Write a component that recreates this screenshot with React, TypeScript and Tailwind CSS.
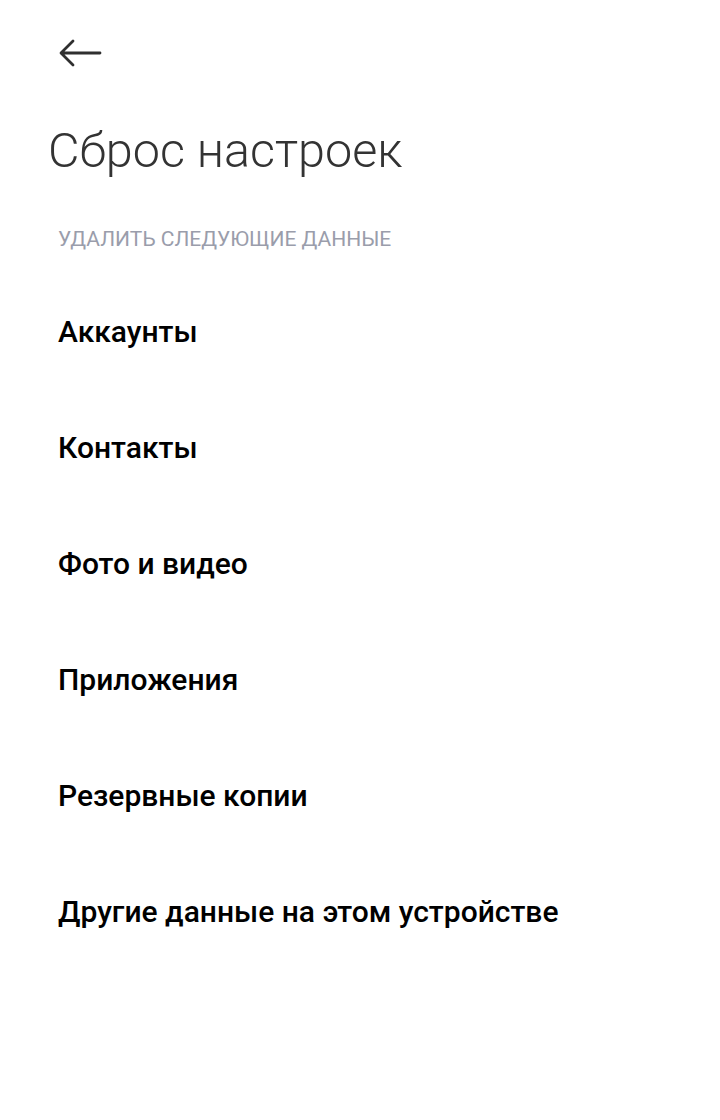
export default function App() {
  const items = [
    "Аккаунты",
    "Контакты",
    "Фото и видео",
    "Приложения",
    "Резервные копии",
    "Другие данные на этом устройстве",
  ];

  return (
    <div className="min-h-screen w-full bg-white font-['Roboto',sans-serif]">
      {/* Header */}
      <div className="pt-[38px] pl-[58px]">
        <svg width="44" height="30" viewBox="0 0 44 30" fill="none" className="block">
          <path
            d="M42 15H4M15 3L3 15L15 27"
            stroke="#2f2f2f"
            strokeWidth="2.8"
            strokeLinecap="round"
            strokeLinejoin="round"
          />
        </svg>
      </div>
      <h1 className="mt-[59px] pl-[48px] text-[48.5px] font-light leading-none text-[#333333]">
        Сброс настроек
      </h1>

      <p className="mt-[53px] pl-[58px] text-[21px] leading-none text-[#9a9dab]">
        УДАЛИТЬ СЛЕДУЮЩИЕ ДАННЫЕ
      </p>

      <ul className="mt-[24px] flex flex-col">
        {items.map((t) => (
          <li key={t} className="flex h-[116px] items-center pl-[58px]">
            <span className="text-[30px] font-medium leading-none text-black">{t}</span>
          </li>
        ))}
      </ul>
    </div>
  );
}
